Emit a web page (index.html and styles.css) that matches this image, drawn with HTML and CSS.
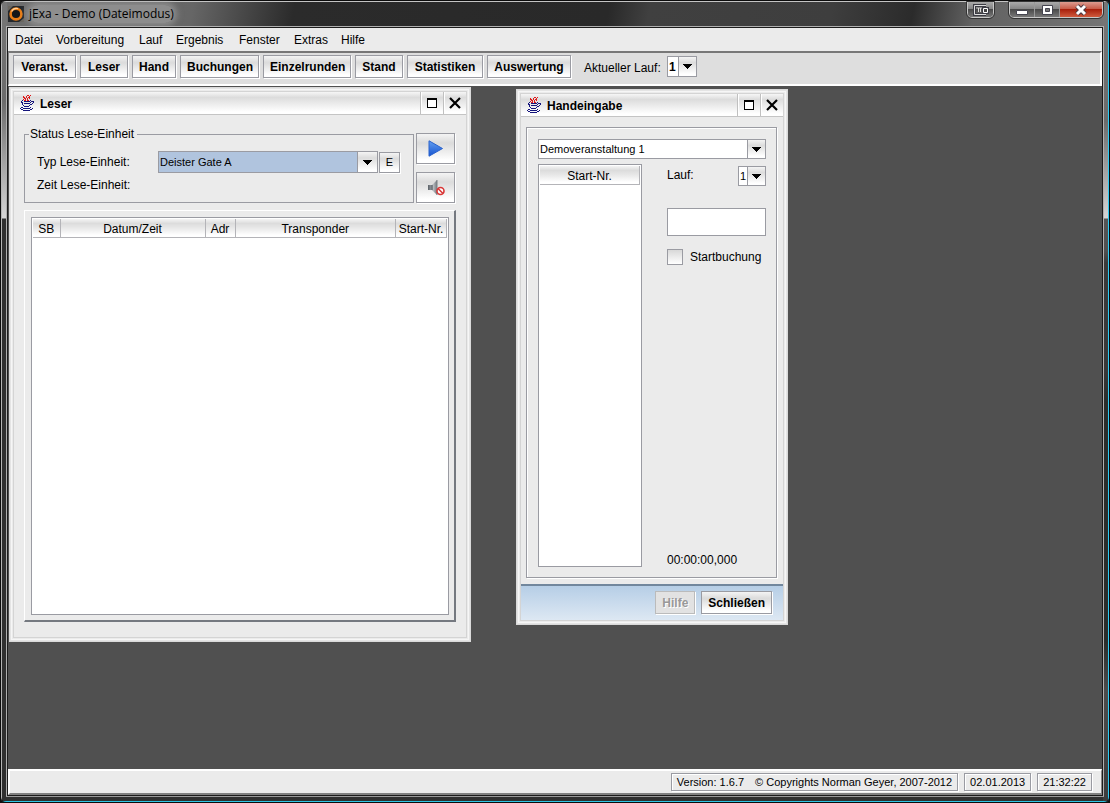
FILE: index.html
```html
<!DOCTYPE html>
<html lang="de">
<head>
<meta charset="utf-8">
<title>jExa - Demo (Dateimodus)</title>
<link rel="stylesheet" href="styles.css">
</head>
<body>
<svg class="defs" aria-hidden="true">
  <symbol id="java" viewBox="0 0 15 17" shape-rendering="crispEdges">
    <path fill="none" stroke="#e01818" d="M7 .5h2M10 .5h1M3 1.5h1M6 1.5h1M9 1.5h1M3 2.5h2M6 2.5h1M8 2.5h2M4 3.5h2M7 3.5h1M9 3.5h1M3 4.5h1M5 4.5h1M7 4.5h1M4 5.5h2M7 5.5h2"/>
    <path fill="none" stroke="#14147c" d="M2 5.5h1M10 5.5h1M1 6.5h1M4 6.5h6M11 6.5h3M1 7.5h2M10 7.5h1M13 7.5h1M2 8.5h1M4 8.5h6M12 8.5h1M2 9.5h1M10 9.5h2M3 10.5h1M9 10.5h1M4 11.5h5M1 12.5h2M10 12.5h1M0 13.5h1M3 13.5h7M12 13.5h1M1 14.5h2M10 14.5h2M3 15.5h7"/>
  </symbol>
  <symbol id="max" viewBox="0 0 11 11" shape-rendering="crispEdges">
    <path fill="#fff" stroke="#000" d="M.5 1.5h9v8h-9z"/><path fill="#000" d="M0 0h10v2H0z"/>
  </symbol>
  <symbol id="cross" viewBox="0 0 12 12">
    <path stroke="#000" stroke-width="2.2" d="M1 1l10 10M11 1L1 11"/>
  </symbol>
  <symbol id="down" viewBox="0 0 9 5" shape-rendering="crispEdges"><path d="M0 0h9v1H8v1H7v1H6v1H5v1H4V4H3V3H2V2H1V1H0z"/></symbol>
</svg>

<div class="window">
  <header class="titlebar">
    <svg class="app-icon" viewBox="0 0 16 16"><path fill="#25282c" d="M0 0h16v16H0z"/><path fill="#6a665f" d="M0 0h5L0 5zM16 16h-5l5-4z"/><circle cx="8" cy="8" r="5.4" fill="#151719" stroke="#e87d16" stroke-width="2.6"/><path d="M3.6 5.5A5.6 5.6 0 0 1 10 2.6" fill="none" stroke="#ffd09a" stroke-width="1.2"/></svg>
    <h1 class="app-title"><span>jExa - Demo (Dateimodus)</span></h1>
    <div class="caption">
      <button class="cap" aria-label="Fenster verschieben"><svg width="18" height="12" viewBox="0 0 18 12"><path d="M14 1.500H2.500v9H14" fill="none" stroke="#3c3c44" stroke-width="3"/><path d="M14 1.500H2.500v9H14M6.500 4v4M8.500 4v4" fill="none" stroke="#ddd"/><path d="M11.500 4.500h4v4h-4z" fill="none" stroke="#3c3c44" stroke-width="3"/><path d="M11.500 4.500h4v4h-4z" fill="#444" stroke="#fff"/></svg></button>
    </div>
    <div class="caption">
      <button class="cap" aria-label="Minimieren"><svg width="12" height="12" viewBox="0 0 12 12"><path d="M.5 6.500h11v4H.5z" fill="#fff" stroke="#454550"/></svg></button>
      <button class="cap" aria-label="Maximieren"><svg width="13" height="12" viewBox="0 0 13 12"><path d="M1.500 1.500h10v9h-10z" fill="#fff" stroke="#454550"/><path d="M4.500 4.500h4v3h-4z" fill="#777" stroke="#454550"/></svg></button>
      <button class="cap cap-close" aria-label="Schließen"><svg width="14" height="12" viewBox="0 0 14 12"><path d="M3 2l8 8M11 2l-8 8" stroke="#4b3840" stroke-width="5"/><path d="M3 2l8 8M11 2l-8 8" stroke="#fff" stroke-width="3"/></svg></button>
    </div>
  </header>

  <main class="client">
    <nav class="menubar">
      <button>Datei</button><button>Vorbereitung</button><button>Lauf</button><button>Ergebnis</button><button>Fenster</button><button>Extras</button><button>Hilfe</button>
    </nav>

    <div class="toolbar">
      <div class="toolbar-buttons">
        <button class="btn">Veranst.</button><button class="btn">Leser</button><button class="btn">Hand</button><button class="btn">Buchungen</button><button class="btn">Einzelrunden</button><button class="btn">Stand</button><button class="btn">Statistiken</button><button class="btn">Auswertung</button>
      </div>
      <label class="run-label" for="run">Aktueller Lauf:</label>
      <span class="combo combo-bold"><select id="run"><option>1</option></select><span class="arrow"><svg><use href="#down"/></svg></span></span>
    </div>

    <div class="desktop">
      <section class="frame frame-reader">
        <header class="frame-title">
          <svg class="cup"><use href="#java"/></svg><h2>Leser</h2>
          <button aria-label="Maximieren"><svg class="i-max"><use href="#max"/></svg></button>
          <button aria-label="Schließen"><svg class="i-cross"><use href="#cross"/></svg></button>
        </header>
        <div class="reader-body">
          <div class="reader-top">
            <fieldset class="status">
              <legend>Status Lese-Einheit</legend>
              <div class="row">
                <label for="unit">Typ Lese-Einheit:</label>
                <span class="combo combo-blue"><select id="unit"><option>Deister Gate A</option></select><span class="arrow"><svg><use href="#down"/></svg></span></span>
                <button class="btn btn-e">E</button>
              </div>
              <div class="row row-time">Zeit Lese-Einheit:</div>
            </fieldset>
            <div class="side">
              <button class="btn btn-icon" aria-label="Start"><svg width="16" height="17" viewBox="0 0 16 17"><defs><linearGradient id="pl" x2="0" y2="1"><stop stop-color="#65a0f0"/><stop offset="1" stop-color="#1553d0"/></linearGradient></defs><path d="M1 .8L14.500 8.500 1 16.200z" fill="url(#pl)" stroke="#2a62cc"/></svg></button>
              <button class="btn btn-icon" aria-label="Ton aus"><svg width="18" height="18" viewBox="0 0 18 18"><defs><linearGradient id="sp" gradientUnits="userSpaceOnUse" x1="0" y1="0" x2="10" y2="0"><stop stop-color="#4c5258"/><stop offset=".4" stop-color="#8d9399"/><stop offset=".65" stop-color="#b4b8bc"/><stop offset="1" stop-color="#767b80"/></linearGradient></defs><path d="M1 6h4l5-5v15l-5-5H1z" fill="url(#sp)"/><path d="M5 6v5" stroke="#555b60"/><path d="M10 1v15" stroke="#7d8286"/><circle cx="13.500" cy="12" r="3.500" fill="#fff" stroke="#d93636" stroke-width="1.600"/><path d="M11 9.500l5 5" stroke="#d93636" stroke-width="1.600"/></svg></button>
            </div>
          </div>
          <div class="raised">
            <div class="list">
              <table class="bookings">
                <colgroup><col class="c-sb"><col class="c-date"><col class="c-adr"><col><col class="c-nr"></colgroup>
                <thead><tr><th>SB</th><th>Datum/Zeit</th><th>Adr</th><th>Transponder</th><th>Start-Nr.</th></tr></thead>
              </table>
            </div>
          </div>
        </div>
      </section>

      <section class="frame frame-hand">
        <header class="frame-title">
          <svg class="cup"><use href="#java"/></svg><h2>Handeingabe</h2>
          <button aria-label="Maximieren"><svg class="i-max"><use href="#max"/></svg></button>
          <button aria-label="Schließen"><svg class="i-cross"><use href="#cross"/></svg></button>
        </header>
        <div class="hand-body">
          <div class="etched">
            <span class="combo combo-event"><select aria-label="Veranstaltung"><option>Demoveranstaltung 1</option></select><span class="arrow"><svg><use href="#down"/></svg></span></span>
            <div class="hand-cols">
              <div class="list"><table><thead><tr><th>Start-Nr.</th></tr></thead></table></div>
              <div class="entry">
                <div class="lap"><label for="lap">Lauf:</label><span class="combo"><select id="lap"><option>1</option></select><span class="arrow"><svg><use href="#down"/></svg></span></span></div>
                <input class="number" type="text" aria-label="Startnummer">
                <label class="check"><input type="checkbox">Startbuchung</label>
                <output class="time">00:00:00,000</output>
              </div>
            </div>
          </div>
        </div>
        <footer class="frame-footer"><button class="btn" disabled>Hilfe</button><button class="btn">Schließen</button></footer>
      </section>
    </div>

    <footer class="statusbar">
      <div class="cell cell-version"><span>Version: 1.6.7</span><span>© Copyrights Norman Geyer, 2007-2012</span></div>
      <div class="cell">02.01.2013</div>
      <div class="cell">21:32:22</div>
    </footer>
  </main>
</div>
</body>
</html>
```

FILE: styles.css
```css
* { box-sizing: border-box; }
body { margin: 0; background: #111; font: 12px/14px "Liberation Sans", Arial, sans-serif; color: #000; }
button, input, select { font: inherit; color: inherit; margin: 0; }
button { padding: 0; border: 0; background: none; }
h1, h2 { margin: 0; font-size: 12px; }
svg { display: block; }
.defs { position: absolute; width: 0; height: 0; }

/* Outer window */
.window {
  display: flex; flex-direction: column; height: 100vh; padding: 1px 5px 5px 5px;
  border: 1px solid #0c0c0c;
  border-radius: 6px;
  background:
    linear-gradient(#2cccf5, #2cccf5) right / 1px 100% no-repeat,
    linear-gradient(#2cc4e4, #2cc4e4) bottom / 100% 1px no-repeat,
    linear-gradient(#b5b5b5, #b5b5b5) left / 1px 100% no-repeat,
    linear-gradient(#c4c4c4, #c4c4c4) top / 100% 1px no-repeat,
    linear-gradient(#777 0, #6b6b6b 100px, #d5d5d5 217px, #303030 218px) left / 6px 100% no-repeat,
    linear-gradient(#777 0, #6b6b6b 120px, #d5d5d5 217px, #555 218px, #505050 250px, #3a3a3a 262px, #383838 370px, #2a2d2b 400px, #2a2d2b 640px, #4c4c4c 690px, #3c3c3c) right / 6px 100% no-repeat,
    linear-gradient(100deg, #707070 0, #6a6a6a 60px, #666 190px, #2b2b2b 290px, #292929 600px, #404040 640px, #3e3e3e 820px, #2b2b2b 900px, #626262 960px, #777 1110px) top / 100% 26px no-repeat,
    #303030;
}
.titlebar { display: flex; align-items: flex-start; height: 24px; padding: 0 1px 0 2px; flex: none; }
.app-icon { width: 16px; height: 16px; margin-top: 4px; }
.app-title { flex: 1; padding: 3px 0 0 5px; font: 12px/18px "Open Sans", "Noto Sans", sans-serif; }
.app-title span { display: inline-block; background: #aaaaaa90; border-radius: 9px; box-shadow: 0 0 6px 3px #aaaaaa90; }
.caption { display: flex; border: 1px solid #c8c8c8; border-top: 0; border-radius: 0 0 5px 5px; margin-right: 15px; overflow: hidden; outline: 1px solid #333; }
.caption:last-child { margin-right: 0; }
.cap { display: flex; align-items: center; justify-content: center; width: 25px; height: 15px; border-right: 1px solid #999; background: linear-gradient(#aaa, #858585 45%, #4a4a4a 50%, #777); }
.cap:last-child { border-right: 0; }
.cap-close { width: 42px; background: linear-gradient(#dd9c90, #c75b48 45%, #a8200c 50%, #cf5a3d); }

.client { flex: 1; display: flex; flex-direction: column; min-height: 0; border: 1px solid #b0b0b0; border-bottom-color: #999; box-shadow: inset 0 0 0 1px #1c1c1c; padding: 1px; background: #505050; }
.menubar { display: grid; grid-template-columns: 41px 83px 37px 63px 55px 47px auto; justify-content: start; justify-items: start; height: 23px; padding: 0 7px; background: #ebebeb; flex: none; }
.toolbar { display: flex; align-items: flex-start; flex: none; height: 35px; padding: 2px 4px; background: #dedede; border: solid #fff; border-width: 2px 2px 2px 1px; border-top-color: #777; border-left-color: #888; }
.toolbar-buttons { display: grid; grid-template-columns: 63px 48px 44px 79px 88px 48px 76px 84px; gap: 4px; }
.btn { height: 23px; padding: 1px 6px 0; border: 1px solid #9a9ba2; box-shadow: 1px 1px 0 #fff; font-weight: bold; background: linear-gradient(#f4f4f4, #dcdcdc 30%, #ddd 35%, #fff 90%); }
.run-label { margin: 6px 0 0 13px; width: 83px; }

.combo { display: grid; height: 21px; font-size: 11px; }
.combo select { grid-area: 1 / 1; min-width: 0; width: 100%; appearance: none; padding: 0 18px 0 1px; border: 1px solid #9a9ba2; border-radius: 0; background: #fff; }
.arrow { grid-area: 1 / 1; justify-self: end; z-index: 1; pointer-events: none; display: flex; align-items: center; justify-content: center; width: 19px; border: 1px solid #9a9ba2; background: linear-gradient(#f4f4f4, #dcdcdc 30%, #fff 90%); }
.arrow svg { width: 9px; height: 5px; }
.combo-bold { width: 30px; font-size: 12px; font-weight: bold; margin-top: 1px; }
.combo-blue { width: 220px; height: 22px; }
.combo-blue select { background: #b0c4de; }
.combo-blue .arrow { width: 21px; }

/* Inner windows */
.desktop { flex: 1; min-height: 0; position: relative; background: #505050; overflow: hidden; }
.frame {
  position: absolute; display: flex; flex-direction: column; padding: 5px; background: #ebebeb;
  box-shadow: inset 0 0 0 1px #dadada, inset 0 0 0 2px #e4e4e4, inset 0 0 0 3px #f6f6f6, inset 0 0 0 4px #ebebeb, inset 0 0 0 5px #d4d4d4;
}
.frame-reader { left: 1px; top: 1px; width: 462px; height: 555px; }
.frame-hand { left: 508px; top: 3px; width: 272px; height: 536px; }
.frame-title { display: flex; align-items: center; flex: none; height: 23px; border-bottom: 1px solid #c4c4c4; background: linear-gradient(#f6f6f6, #dcdcdc 25%, #e4e4e4 40%, #fff 90%); }
.frame-title h2 { flex: 1; padding: 2px 0 0 5px; }
.frame-title button { display: flex; align-items: center; justify-content: center; width: 23px; height: 22px; border-left: 1px solid #c0c0c0; box-shadow: inset 1px 0 0 #fff; }
.cup { width: 15px; height: 17px; margin-left: 6px; }
.i-max { width: 11px; height: 11px; }
.i-cross { width: 12px; height: 12px; }

.reader-body { flex: 1; display: flex; flex-direction: column; gap: 7px; padding: 12px 10px 15px 10px; }
.reader-top { display: flex; gap: 2px; }
.status { flex: 1; min-width: 0; height: 76px; margin: 0; padding: 10px 13px 0 12px; border: 1px solid #9a9ba2; }
.status legend { margin-left: -8px; padding: 0 3px 0 1px; }
.row { display: flex; align-items: center; gap: 1px; }
.row label { flex: 1; }
.row-time { margin-top: 5px; }
.btn-e { width: 21px; height: 21px; padding: 0; font-size: 11px; font-weight: normal; }
.side { display: flex; flex-direction: column; gap: 8px; padding-top: 6px; width: 39px; margin-right: 1px; }
.btn-icon { display: flex; align-items: center; justify-content: center; height: 31px; padding: 0; }
.raised { flex: 1; display: flex; padding: 6px 5px 5px 6px; border: solid; border-width: 1px 2px 2px 1px; border-color: #fff #757980 #757980 #fff; }
.list { flex: 1; padding: 1px; border: 1px solid #9a9ba2; background: #fff; }
table { width: 100%; table-layout: fixed; border-collapse: collapse; }
th { height: 18px; padding: 2px 0 0; font-weight: normal; white-space: nowrap; border: solid #b4b4b8; border-width: 0 1px 1px 0; background: linear-gradient(#f4f4f4, #dcdcdc 25%, #e8e8e8 50%, #fff 90%); }
.c-sb { width: 27px; }
.c-date { width: 145px; }
.c-adr { width: 30px; }
.c-nr { width: 51px; }

.hand-body { flex: 1; display: flex; padding: 10px 6px 6px 5px; }
.etched { flex: 1; display: flex; flex-direction: column; gap: 5px; padding: 11px 10px 10px 11px; border: 1px solid #9a9ba2; box-shadow: 1px 1px 0 #fff, inset 1px 1px 0 #fff; }
.combo-event { height: 20px; }
.hand-cols { flex: 1; display: flex; gap: 25px; }
.hand-cols .list { flex: 0 0 104px; }
.entry { flex: 1; display: flex; flex-direction: column; padding-top: 2px; }
.lap { display: flex; justify-content: space-between; padding-bottom: 22px; }
.lap label { padding-top: 2px; }
.lap .combo { width: 28px; height: 20px; }
.number { width: 100%; height: 28px; border: 1px solid #9a9ba2; }
.check { display: flex; align-items: center; gap: 7px; margin-top: 13px; white-space: nowrap; }
.check input { appearance: none; flex: none; width: 16px; height: 16px; border: 1px solid #9a9ba2; background: linear-gradient(#d8d8d8, #fff); }
.time { margin-top: auto; }
.frame-footer { display: flex; justify-content: flex-end; gap: 6px; flex: none; height: 36px; padding: 5px 11px 0 0; border-top: 2px solid #72879d; background: linear-gradient(#b6cee6, #dde8f3); }
.btn:disabled { color: #999; border-color: #bbb; background: #e2e2e2; text-shadow: 1px 1px 0 #fff; }

.statusbar { display: flex; justify-content: flex-end; gap: 6px; flex: none; height: 26px; padding: 2px 9px 0 0; font-size: 11px; background: #ebebeb; border: solid; border-width: 2px 1px 2px 2px; border-color: #fff #888 #808080 #fff; }
.cell { height: 18px; padding: 1px 5px; border: 1px solid #9a9ba2; box-shadow: 1px 1px 0 #fff, inset 1px 1px 0 #fff; white-space: nowrap; }
.cell-version { display: flex; gap: 11px; }
```
